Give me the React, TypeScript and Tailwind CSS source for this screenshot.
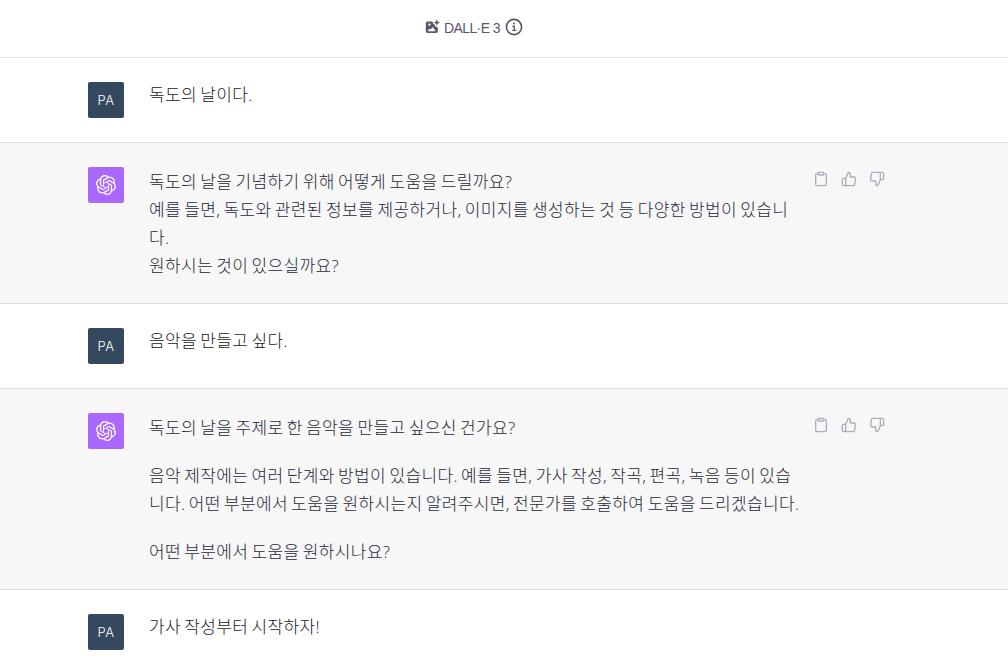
import { FiClipboard, FiThumbsDown, FiThumbsUp } from "react-icons/fi";
import { SiOpenai } from "react-icons/si";

type Message = {
  from: "user" | "assistant";
  // one entry per paragraph, each a list of lines
  paragraphs: string[][];
};

const messages: Message[] = [
  { from: "user", paragraphs: [["독도의 날이다."]] },
  {
    from: "assistant",
    paragraphs: [
      [
        "독도의 날을 기념하기 위해 어떻게 도움을 드릴까요?",
        "예를 들면, 독도와 관련된 정보를 제공하거나, 이미지를 생성하는 것 등 다양한 방법이 있습니",
        "다.",
        "원하시는 것이 있으실까요?",
      ],
    ],
  },
  { from: "user", paragraphs: [["음악을 만들고 싶다."]] },
  {
    from: "assistant",
    paragraphs: [
      ["독도의 날을 주제로 한 음악을 만들고 싶으신 건가요?"],
      [
        "음악 제작에는 여러 단계와 방법이 있습니다. 예를 들면, 가사 작성, 작곡, 편곡, 녹음 등이 있습",
        "니다. 어떤 부분에서 도움을 원하시는지 알려주시면, 전문가를 호출하여 도움을 드리겠습니다.",
      ],
      ["어떤 부분에서 도움을 원하시나요?"],
    ],
  },
  { from: "user", paragraphs: [["가사 작성부터 시작하자!"]] },
];

function ImageSparkIcon() {
  return (
    <svg viewBox="0 0 16 16" className="h-4 w-4" fill="currentColor">
      <path
        fillRule="evenodd"
        d="M3.6 2.4h5a3.2 3.2 0 0 0 1.9 3.1 3.2 3.2 0 0 0 3.3 2.7v4.1a1.8 1.8 0 0 1-1.8 1.8H3.6a1.8 1.8 0 0 1-1.8-1.8V4.2a1.8 1.8 0 0 1 1.8-1.8Zm1.8 2.2a1.1 1.1 0 1 0 0 2.2 1.1 1.1 0 0 0 0-2.2ZM3.7 12.2h8L8.8 8 6.6 10.6 5.5 9.5Z"
      />
      <path d="m12.8.3.9 2.4 2.4.9-2.4.9-.9 2.4-.9-2.4-2.4-.9 2.4-.9Z" />
    </svg>
  );
}

function InfoIcon() {
  return (
    <svg viewBox="0 0 18 18" className="h-[18px] w-[18px]" fill="none" stroke="currentColor" strokeWidth="1.6">
      <circle cx="9" cy="9" r="7.6" />
      <path d="M7.4 8.2H9.2v4.2M7.2 12.4h4" strokeWidth="1.4" />
      <circle cx="9" cy="5.6" r="1" fill="currentColor" stroke="none" />
    </svg>
  );
}

function Avatar({ from }: { from: Message["from"] }) {
  if (from === "assistant") {
    return (
      <div className="flex h-9 w-9 shrink-0 items-center justify-center rounded-xs bg-[#ab68ff] text-white">
        <SiOpenai className="h-5 w-5" />
      </div>
    );
  }
  return (
    <div className="flex h-9 w-9 shrink-0 items-center justify-center rounded-xs bg-[#34495e] pt-px font-['Inter',sans-serif] text-[13px] font-light tracking-[0.4px] text-white">
      PA
    </div>
  );
}

function MessageRow({ message }: { message: Message }) {
  const assistant = message.from === "assistant";
  return (
    <div className={`border-b border-[#dfdfe0] py-6 pl-[88px] ${assistant ? "bg-[#f7f7f8]" : "bg-white"}`}>
      <div className="flex">
        <Avatar from={message.from} />
        <div
          className={`-mb-px ml-[25px] flex w-[665px] shrink-0 flex-col gap-5 whitespace-nowrap pt-px text-[17px] font-light tracking-[0.36px] [word-spacing:-1.5px] ${assistant ? "leading-7 text-[#1f2937]" : "leading-6 text-[#202123]"}`}
        >
          {message.paragraphs.map((lines, i) => (
            <div key={i}>
              {lines.map((line) => (
                <p key={line}>{line}</p>
              ))}
            </div>
          ))}
        </div>
        {assistant && (
          <div className="mt-1 flex h-4 gap-3 text-[#acacbe]">
            <FiClipboard className="h-4 w-4 -ml-px" />
            <FiThumbsUp className="h-4 w-4" />
            <FiThumbsDown className="h-4 w-4" />
          </div>
        )}
      </div>
    </div>
  );
}

export default function App() {
  return (
    <main className="h-[672px] w-[1008px] overflow-hidden bg-white font-['Open_Sans','Noto_Sans_CJK_KR',sans-serif]">
      <header className="flex h-[58px] items-center border-b border-[#e5e5e6] pb-[3px] pl-[424px] text-[#565869]">
        <ImageSparkIcon />
        <span className="ml-1 mr-[5px] pt-px font-['Liberation_Sans',sans-serif] text-sm tracking-[-0.6px]">DALL·E 3</span>
        <InfoIcon />
      </header>
      {messages.map((message, i) => (
        <MessageRow key={i} message={message} />
      ))}
    </main>
  );
}
